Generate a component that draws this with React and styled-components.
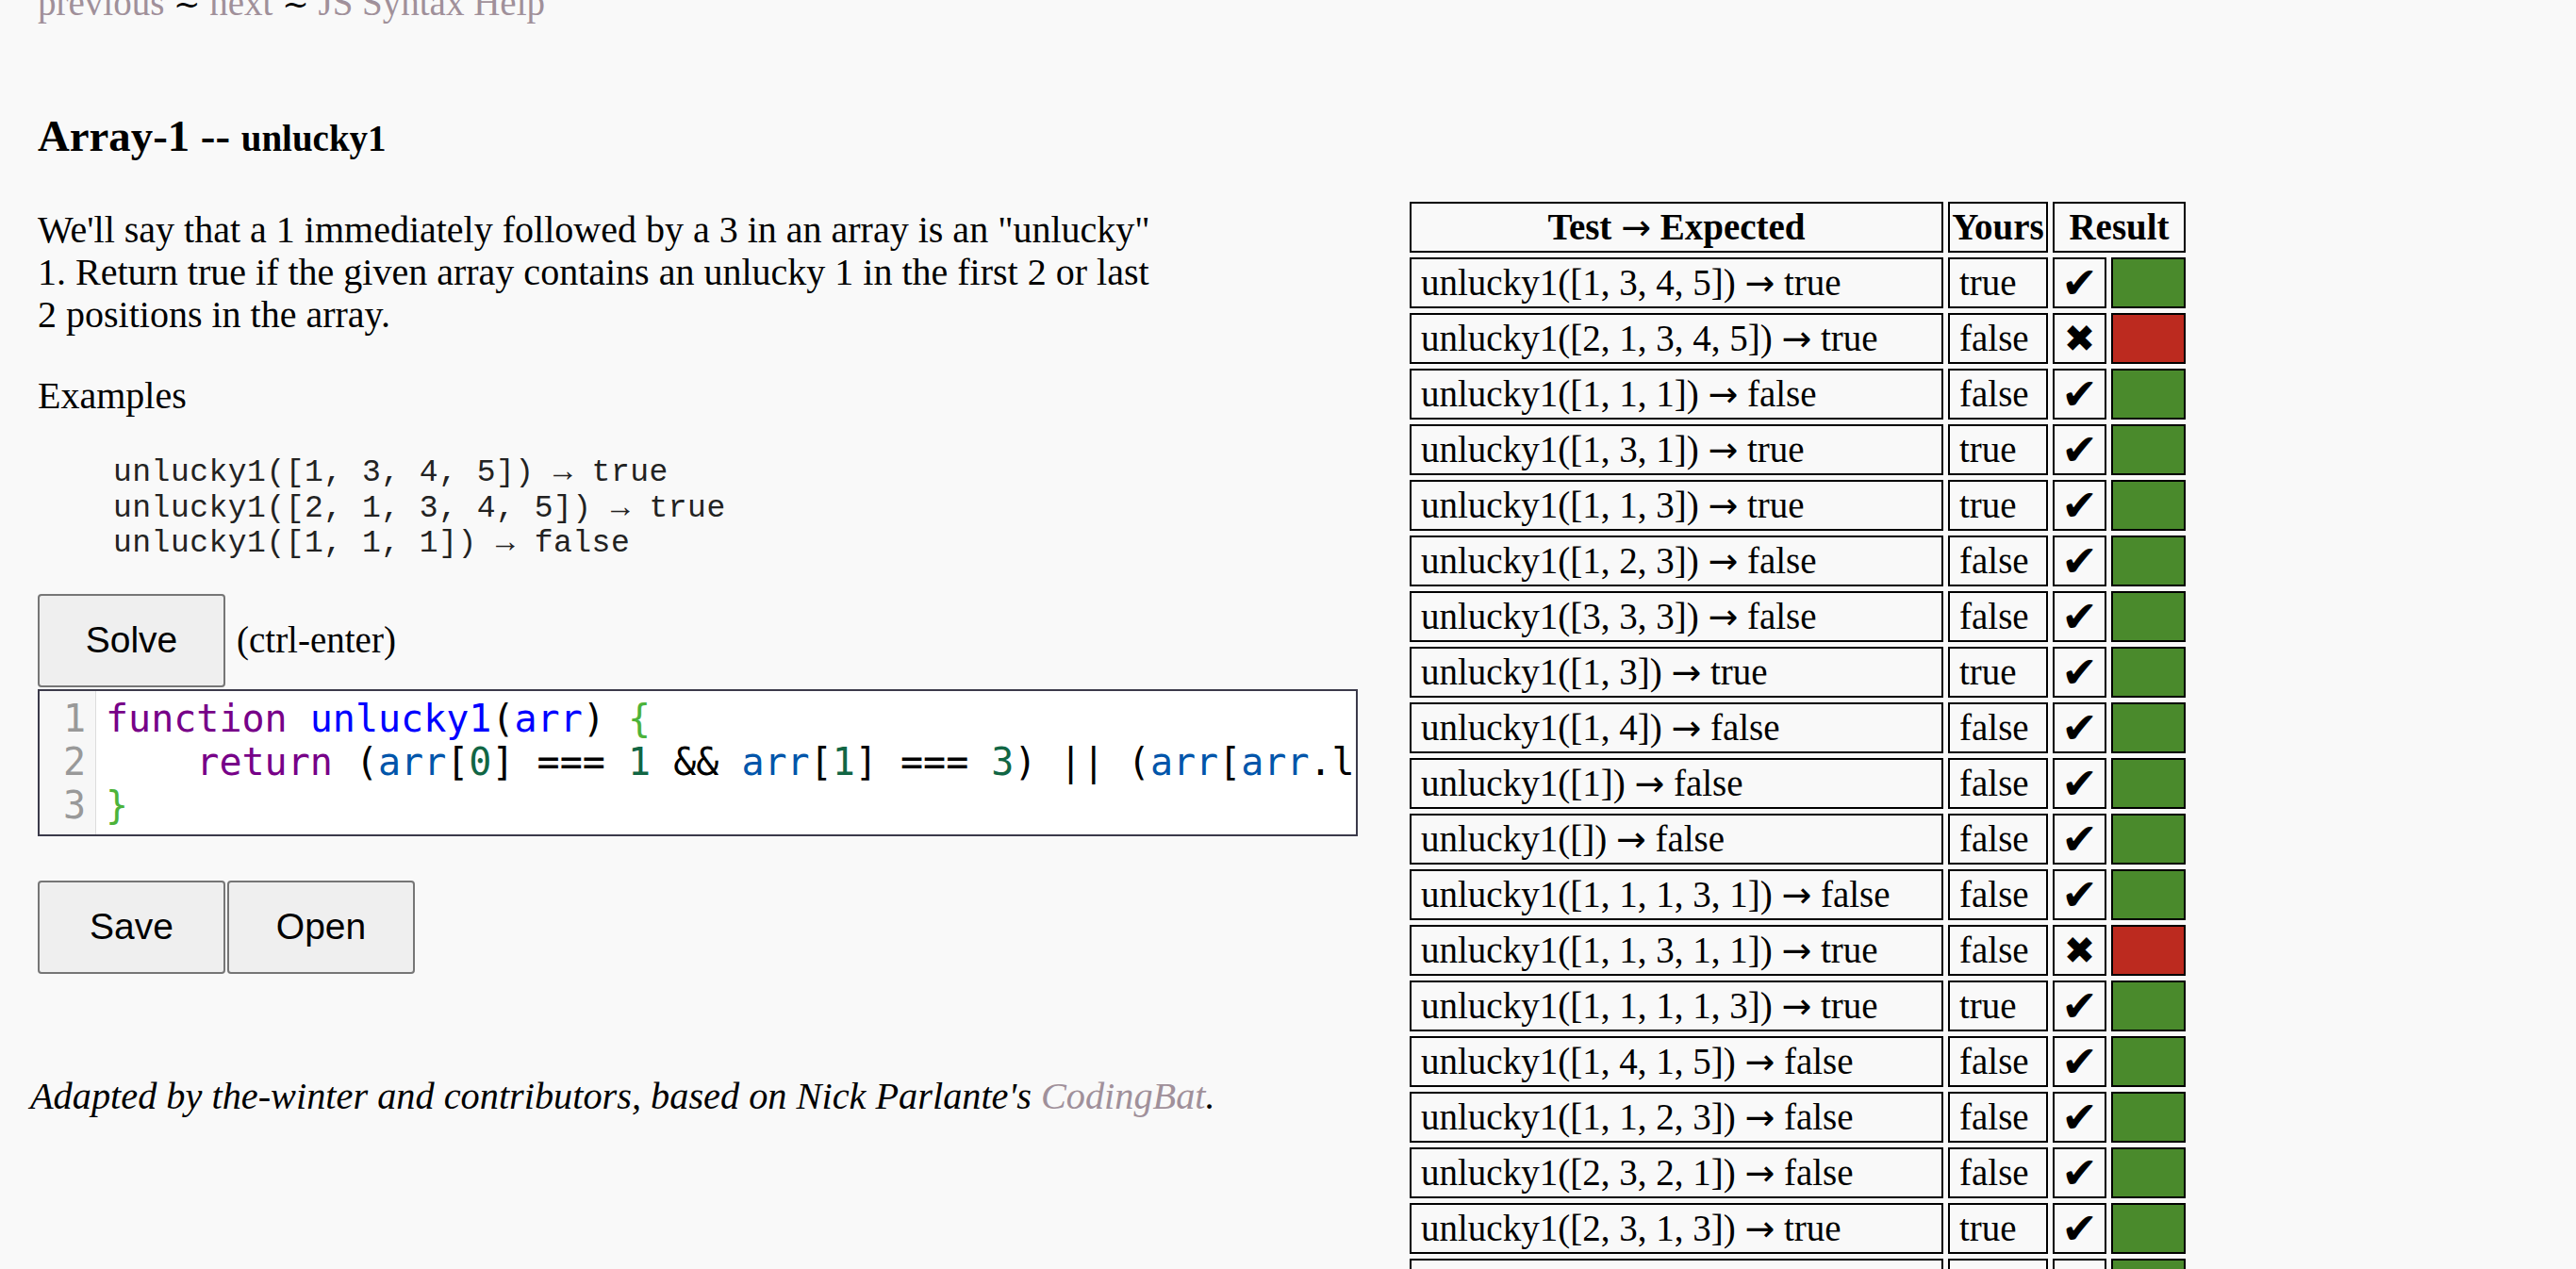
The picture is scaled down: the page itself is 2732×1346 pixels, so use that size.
import React from "react"
import styled, { createGlobalStyle } from "styled-components"

const GlobalStyle = createGlobalStyle`
  html, body {
    margin: 0;
    padding: 0;
    background: #f9f9f9;
  }
  body {
    font-family: "Liberation Serif", "Times New Roman", serif;
    font-size: 39px;
    line-height: 45px;
    color: #000;
    overflow: hidden;
  }
`

const tests = [
  ["[1, 3, 4, 5]", "true", "true"],
  ["[2, 1, 3, 4, 5]", "true", "false"],
  ["[1, 1, 1]", "false", "false"],
  ["[1, 3, 1]", "true", "true"],
  ["[1, 1, 3]", "true", "true"],
  ["[1, 2, 3]", "false", "false"],
  ["[3, 3, 3]", "false", "false"],
  ["[1, 3]", "true", "true"],
  ["[1, 4]", "false", "false"],
  ["[1]", "false", "false"],
  ["[]", "false", "false"],
  ["[1, 1, 1, 3, 1]", "false", "false"],
  ["[1, 1, 3, 1, 1]", "true", "false"],
  ["[1, 1, 1, 1, 3]", "true", "true"],
  ["[1, 4, 1, 5]", "false", "false"],
  ["[1, 1, 2, 3]", "false", "false"],
  ["[2, 3, 2, 1]", "false", "false"],
  ["[2, 3, 1, 3]", "true", "true"],
  ["[1, 2, 3, 4]", "false", "false"],
]

const Page = styled.div`
  display: flex;
  align-items: flex-start;
  gap: 50px;
  padding-left: 40px;
`

const Left = styled.div`
  flex: none;
  width: 1400px;
  display: flex;
  flex-direction: column;
  align-items: flex-start;
`

const Nav = styled.div`
  margin-top: -20px;
  white-space: nowrap;
`

const NavLink = styled.a`
  color: #a0909a;
  text-decoration: none;
`

const Tilde = styled.span`
  font-family: "DejaVu Serif", serif;
  font-size: 34px;
`

const Arrow = styled.span`
  font-family: "DejaVu Sans", sans-serif;
  font-size: 38px;
  font-weight: normal;
`

const Title = styled.h2`
  margin: 90px 0 0;
  font-size: 46.8px;
  line-height: 54px;
  font-weight: bold;

  span {
    font-size: 39px;
  }
`

const Text = styled.p`
  margin: ${(p) => p.$top}px 0 0;
  font-size: 40px;
  white-space: nowrap;
`

const Examples = styled.pre`
  margin: 41px 0 0 80px;
  font-family: "Liberation Mono", "Courier New", monospace;
  font-size: 33px;
  line-height: 37.5px;
  letter-spacing: 0.5px;
  color: #222;
`

const SolveRow = styled.div`
  margin-top: 34px;
  display: flex;
  align-items: baseline;
  gap: 12px;
`

const Button = styled.button`
  box-sizing: border-box;
  width: 199px;
  height: 99px;
  padding: 0;
  background: #efefef;
  border: 2px solid #767676;
  border-radius: 4px;
  font-family: "Liberation Sans", Arial, sans-serif;
  font-size: 39px;
  color: #000;
`

const Editor = styled.div`
  box-sizing: border-box;
  margin-top: 2px;
  width: 1400px;
  height: 156px;
  display: flex;
  background: #fff;
  border: 2px solid #3b3a4a;
  overflow: hidden;
  font-family: "DejaVu Sans Mono", monospace;
  font-size: 40px;
  line-height: 46px;
`

const Gutter = styled.div`
  box-sizing: border-box;
  flex: none;
  width: 60px;
  padding: 6px 10px 0 0;
  background: #f7f7f7;
  border-right: 1px solid #ddd;
  color: #999;
  text-align: right;
`

const Code = styled.pre`
  margin: 0;
  padding: 6px 0 0 10px;
  font: inherit;
  white-space: pre;
  color: #000;
`

const tokenColors = {
  kw: "#708",
  def: "#00f",
  v: "#05a",
  num: "#164",
  br: "#4cb33a",
}

const Tok = styled.span`
  color: ${(p) => tokenColors[p.$k]};
`

const ButtonRow = styled.div`
  margin-top: 47px;
  display: flex;
  gap: 2px;
`

const Footer = styled.p`
  margin: 107px 0 0 -8px;
  font-size: 40.3px;
  font-style: italic;
  white-space: nowrap;
`

const Table = styled.table`
  flex: none;
  margin-top: 209px;
  width: 833px;
  table-layout: fixed;
  border-collapse: separate;
  border-spacing: 5px;
`

const Col = styled.col`
  width: ${(p) => p.$w}px;
`

const Th = styled.th`
  box-sizing: border-box;
  border: 2px solid #000;
  padding: 2px;
  line-height: 46px;
  font-weight: bold;
  text-align: center;
  white-space: nowrap;
`

const Td = styled.td`
  box-sizing: border-box;
  border: 2px solid #000;
  padding: 2px 10px;
  height: 54px;
  line-height: 46px;
  white-space: nowrap;
  overflow: hidden;
`

const Mark = styled(Td)`
  padding: 0;
  overflow: visible;
  text-align: center;
  font-family: "DejaVu Sans", sans-serif;
  font-size: ${(p) => (p.$ok ? 46 : 40)}px;
  line-height: 46px;
`

const Status = styled(Td)`
  padding: 0;
  background: ${(p) => (p.$ok ? "#4a8a2c" : "#bc2a1f")};
`

function TestTable() {
  return (
    <Table>
      <colgroup>
        <Col $w={566} />
        <Col $w={106} />
        <Col $w={57} />
        <Col $w={79} />
      </colgroup>
      <thead>
        <tr>
          <Th>
            Test <Arrow>→</Arrow> Expected
          </Th>
          <Th>Yours</Th>
          <Th colSpan={2}>Result</Th>
        </tr>
      </thead>
      <tbody>
        {tests.map(([arg, expected, yours]) => {
          const ok = expected === yours
          return (
            <tr key={arg}>
              <Td>
                unlucky1({arg}) <Arrow>→</Arrow> {expected}
              </Td>
              <Td>{yours}</Td>
              <Mark $ok={ok}>{ok ? "✔" : "✖"}</Mark>
              <Status $ok={ok} />
            </tr>
          )
        })}
      </tbody>
    </Table>
  )
}

export default function App() {
  return (
    <>
      <GlobalStyle />
      <Page>
        <Left>
          <Nav>
            <NavLink href="#">previous</NavLink> <Tilde>~</Tilde> <NavLink href="#">next</NavLink>{" "}
            <Tilde>~</Tilde> <NavLink href="#">JS Syntax Help</NavLink>
          </Nav>
          <Title>
            Array-1 -- <span>unlucky1</span>
          </Title>
          <Text $top={47}>
            We'll say that a 1 immediately followed by a 3 in an array is an "unlucky"
            <br />
            1. Return true if the given array contains an unlucky 1 in the first 2 or last
            <br />2 positions in the array.
          </Text>
          <Text $top={41}>Examples</Text>
          <Examples>
            {"unlucky1([1, 3, 4, 5]) → true\nunlucky1([2, 1, 3, 4, 5]) → true\nunlucky1([1, 1, 1]) → false"}
          </Examples>
          <SolveRow>
            <Button>Solve</Button>
            <span>(ctrl-enter)</span>
          </SolveRow>
          <Editor>
            <Gutter>
              1<br />2<br />3
            </Gutter>
            <Code>
              <Tok $k="kw">function</Tok> <Tok $k="def">unlucky1</Tok>(<Tok $k="def">arr</Tok>){" "}
              <Tok $k="br">{"{"}</Tok>
              {"\n    "}
              <Tok $k="kw">return</Tok> (<Tok $k="v">arr</Tok>[<Tok $k="num">0</Tok>] === <Tok $k="num">1</Tok>{" "}
              && <Tok $k="v">arr</Tok>[<Tok $k="num">1</Tok>] === <Tok $k="num">3</Tok>) || (<Tok $k="v">arr</Tok>[
              <Tok $k="v">arr</Tok>.length - <Tok $k="num">2</Tok>] === <Tok $k="num">1</Tok> && <Tok $k="v">arr</Tok>[
              <Tok $k="v">arr</Tok>.length - <Tok $k="num">1</Tok>] === <Tok $k="num">3</Tok>);
              {"\n"}
              <Tok $k="br">{"}"}</Tok>
            </Code>
          </Editor>
          <ButtonRow>
            <Button>Save</Button>
            <Button>Open</Button>
          </ButtonRow>
          <Footer>
            Adapted by the-winter and contributors, based on Nick Parlante's{" "}
            <NavLink href="#">CodingBat</NavLink>.
          </Footer>
        </Left>
        <TestTable />
      </Page>
    </>
  )
}
